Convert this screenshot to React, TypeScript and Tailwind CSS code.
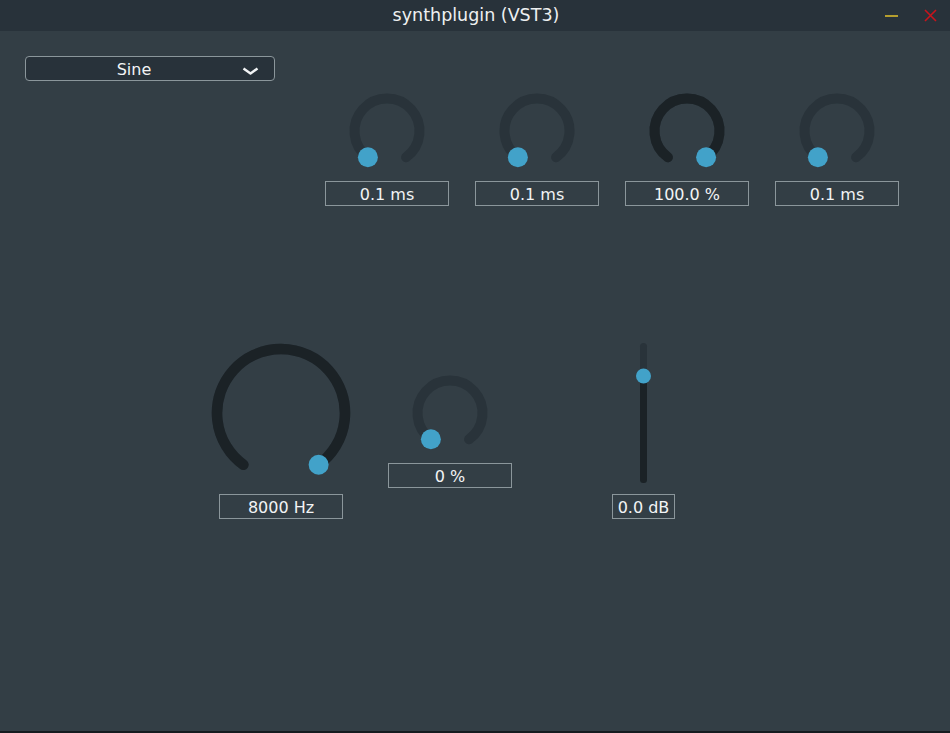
import React from 'react';

const START = (-144 * Math.PI) / 180;
const END = (144 * Math.PI) / 180;

type KnobProps = {
  size: number;
  radius: number;
  stroke: number;
  value: number;
};

function pt(c: number, r: number, a: number) {
  return [c + r * Math.sin(a), c - r * Math.cos(a)];
}

function arc(c: number, r: number, a0: number, a1: number) {
  const [x0, y0] = pt(c, r, a0);
  const [x1, y1] = pt(c, r, a1);
  const large = a1 - a0 > Math.PI ? 1 : 0;
  return `M ${x0} ${y0} A ${r} ${r} 0 ${large} 1 ${x1} ${y1}`;
}

function Knob({ size, radius, stroke, value }: KnobProps) {
  const c = size / 2;
  const a = START + (END - START) * value;
  const [tx, ty] = pt(c, radius, a);
  return (
    <svg width={size} height={size} viewBox={`0 0 ${size} ${size}`} className="block">
      <path d={arc(c, radius, START, END)} fill="none" stroke="#29333a" strokeWidth={stroke} strokeLinecap="round" />
      {value > 0 && (
        <path d={arc(c, radius, START, a)} fill="none" stroke="#1b2226" strokeWidth={stroke} strokeLinecap="round" />
      )}
      <circle cx={tx} cy={ty} r={10} fill="#42a2c9" />
    </svg>
  );
}

function ValueBox({ text, w = 'w-[124px]' }: { text: string; w?: string }) {
  return (
    <div
      className={`${w} h-[25px] pt-[2px] border border-[#8b969b] flex items-center justify-center text-[16px] text-[#f2f4f5] leading-none`}
    >
      {text}
    </div>
  );
}

const topKnobs = [
  { value: 0, label: '0.1 ms' },
  { value: 0, label: '0.1 ms' },
  { value: 1, label: '100.0 %' },
  { value: 0, label: '0.1 ms' },
];

export default function App() {
  return (
    <div
      className="w-[950px] h-[733px] flex flex-col bg-[#333e45] overflow-hidden"
      style={{ fontFamily: '"DejaVu Sans", Verdana, sans-serif' }}
    >
      {/* title bar */}
      <div className="h-[31px] shrink-0 bg-[#28323a] flex items-center relative">
        <div className="flex-1 text-center text-[17.5px] text-[#eef0f1] pl-[2px]">synthplugin (VST3)</div>
        <div className="absolute right-[13px] top-0 h-[31px] flex items-center gap-[26px]">
          <div className="w-[13px] h-[2px] bg-[#b59e2e]" />
          <svg width="13" height="13" viewBox="0 0 13 13">
            <path d="M1 1 L12 12 M12 1 L1 12" stroke="#c8141c" strokeWidth="1.6" />
          </svg>
        </div>
      </div>

      <div className="flex-1 flex flex-col">
        {/* oscillator select */}
        <div className="pl-[25px] pt-[25px]">
          <div className="w-[250px] h-[25px] rounded-[4px] border border-[#8b969b] bg-[#28323a] flex items-center relative">
            <span className="flex-1 text-center text-[16px] text-[#f2f4f5] pr-[32px] pt-[2px]">Sine</span>
            <svg className="absolute right-[15px] top-[10px]" width="17" height="8" viewBox="0 0 17 8">
              <polyline points="1.5,1.5 8.5,6.5 15.5,1.5" fill="none" stroke="#f2f4f5" strokeWidth="2.4" strokeLinejoin="round" />
            </svg>
          </div>
        </div>

        {/* envelope knobs */}
        <div className="ml-[312px] mt-[10px] grid grid-cols-4 w-[600px]">
          {topKnobs.map((k, i) => (
            <div key={i} className="flex flex-col items-center">
              <Knob size={80} radius={32.5} stroke={10} value={k.value} />
              <div className="mt-[10px]">
                <ValueBox text={k.label} />
              </div>
            </div>
          ))}
        </div>

        {/* filter / gain */}
        <div className="flex items-start ml-[206px] mt-[132px]">
          <div className="flex flex-col items-center w-[150px]">
            <Knob size={150} radius={64} stroke={10.5} value={1} />
            <div className="mt-[6px]">
              <ValueBox text="8000 Hz" />
            </div>
          </div>
          <div className="flex flex-col items-center w-[124px] ml-[32px] mt-[35px]">
            <Knob size={80} radius={32.5} stroke={10} value={0} />
            <div className="mt-[10px]">
              <ValueBox text="0 %" />
            </div>
          </div>
          <div className="flex flex-col items-center w-[63px] ml-[100px]">
            <svg width="63" height="150" viewBox="0 0 63 150" className="block">
              <line x1="31.5" y1="8.5" x2="31.5" y2="141.5" stroke="#29333a" strokeWidth="7" strokeLinecap="round" />
              <line x1="31.5" y1="38" x2="31.5" y2="141.5" stroke="#1b2226" strokeWidth="7" strokeLinecap="round" />
              <circle cx="31.5" cy="38" r="7.5" fill="#42a2c9" />
            </svg>
            <div className="mt-[6px]">
              <ValueBox text="0.0 dB" w="w-[63px]" />
            </div>
          </div>
        </div>
      </div>
      <div className="h-[2px] shrink-0 bg-[#151b1f]" />
    </div>
  );
}
